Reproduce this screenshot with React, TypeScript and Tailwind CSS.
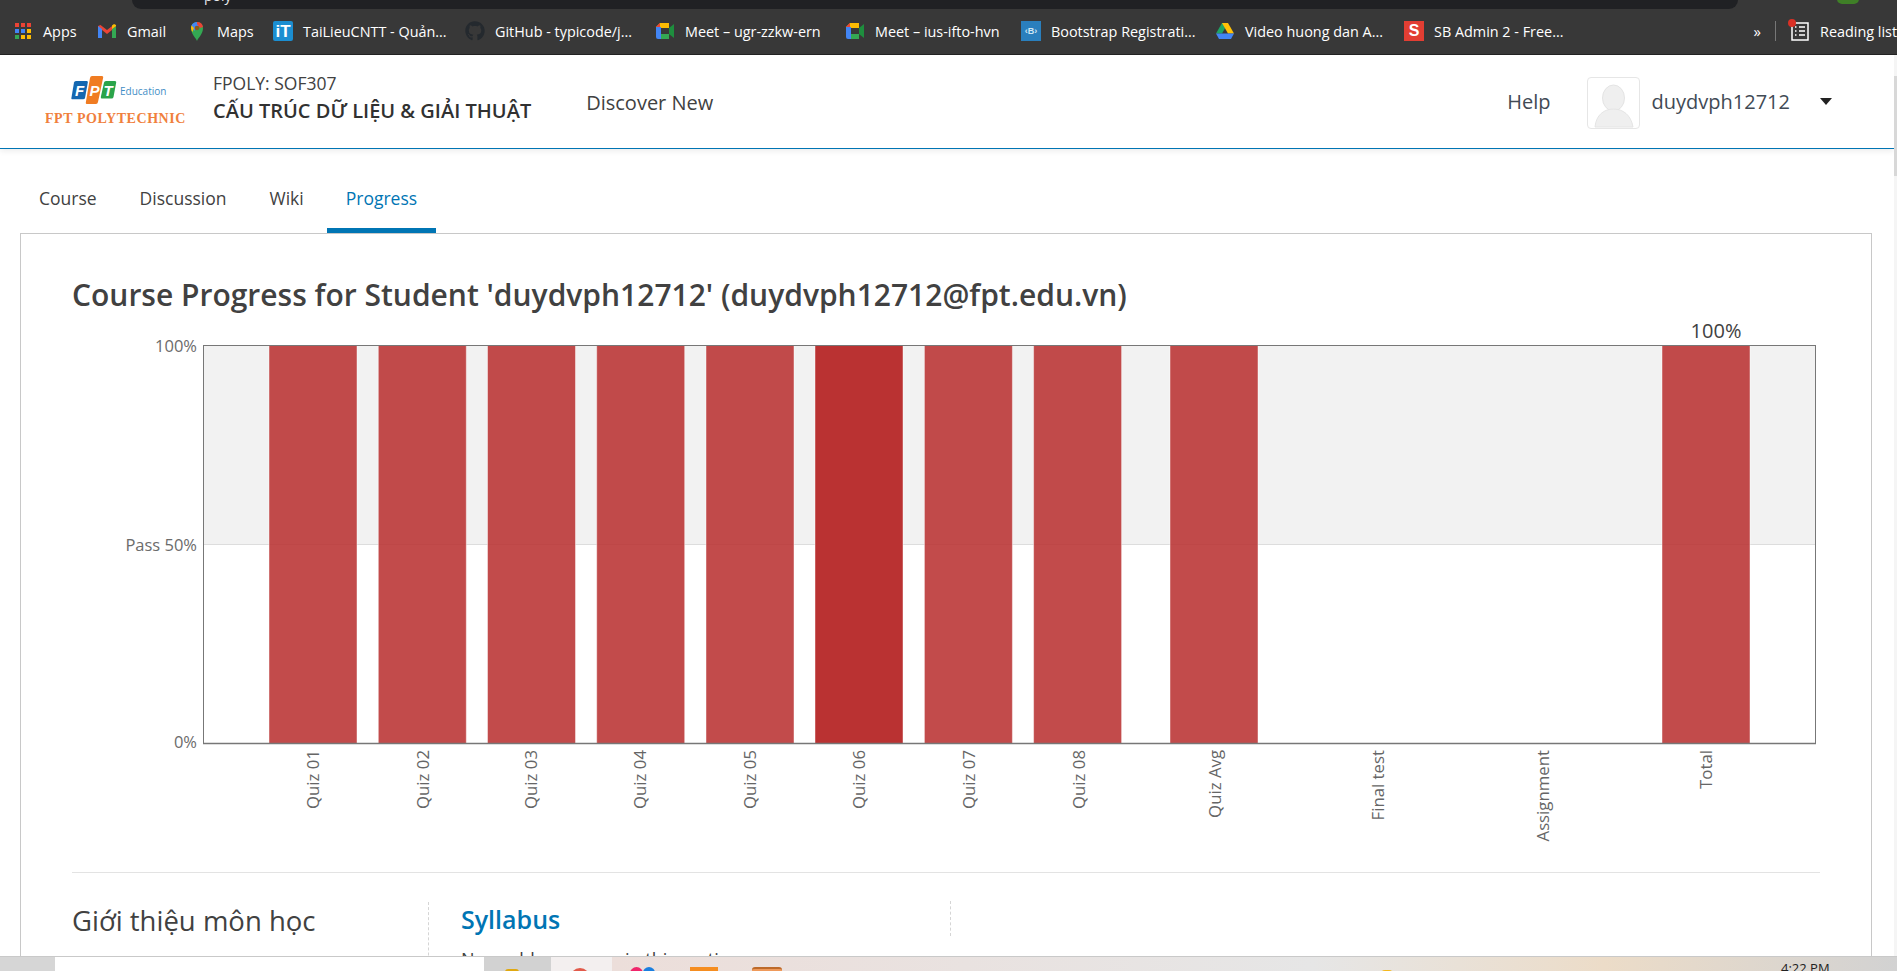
import React from "react";
import { FaGithub } from "react-icons/fa";

const Apps = () => (
  <svg width="20" height="18" viewBox="0 0 18 18">
    {[["#ea4335", "#ea4335", "#ea4335"], ["#4285f4", "#4285f4", "#fbbc04"], ["#34a853", "#fbbc04", "#fbbc04"]].map((r, i) =>
      r.map((c, j) => <rect key={`${i}${j}`} x={1 + j * 6} y={1 + i * 6} width="4" height="4" fill={c} />)
    )}
  </svg>
);
const Gmail = () => (
  <svg width="20" height="16" viewBox="0 0 20 16">
    <path d="M1 15V3l2.500-1L10 7l6.500-5L19 3v12h-4V7l-5 4-5-4v8z" fill="#ea4335" />
    <path d="M1 15V3l4 3v9z" fill="#4285f4" />
    <path d="M19 15V3l-4 3v9z" fill="#34a853" />
    <path d="M15 6l4-3V2l-2-1-2 1.500z" fill="#fbbc04" />
  </svg>
);
const MapPin = () => (
  <svg width="20" height="20" viewBox="0 0 20 20">
    <path d="M10 20c-1-3-6-7-6-13a6 6 0 0 1 12 0c0 6-5 10-6 13z" fill="#34a853" />
    <path d="M4.500 4.500A6 6 0 0 1 10 1l3 3-6 6z" fill="#4285f4" />
    <path d="M4 7c0-1 .2-1.800.5-2.500L7 7l-1.500 4C4.500 9.500 4 8.500 4 7z" fill="#fbbc04" />
    <path d="M10 1a6 6 0 0 1 6 5l-3 1-3-4z" fill="#ea4335" />
    <circle cx="10" cy="7" r="2.300" fill="#8a5a1e" />
  </svg>
);
const IT = () => (
  <div className="flex h-[20px] w-[20px] items-center justify-center rounded-[2px] bg-[#1b8ed1] text-[17px] font-bold leading-none text-white [font-family:'Liberation_Sans',sans-serif]">iT</div>
);
const Meet = () => (
  <svg width="20" height="18" viewBox="0 0 20 18">
    <path d="M1 5l4-4h9v5H6v6H1z" fill="#fbbc04" />
    <path d="M1 12h5v5H3a2 2 0 0 1-2-2z" fill="#4285f4" />
    <path d="M1 5h5v7H1z" fill="#4285f4" />
    <path d="M1 5l4-4v4z" fill="#ea4335" />
    <path d="M6 12h8v5H6z" fill="#34a853" />
    <path d="M14 6v6l5 4V2z" fill="#1e8e3e" />
  </svg>
);
const Boot = () => (
  <div className="flex h-[20px] w-[20px] items-center justify-center bg-[#2a7fbd] text-[9px] font-bold leading-none text-[#cfe6f5] [font-family:'Liberation_Sans',sans-serif]">‹B›</div>
);
const Drive = () => (
  <svg width="20" height="18" viewBox="0 0 20 18">
    <path d="M7 1h6l-6 10.500H1z" fill="#1fa463" />
    <path d="M7 1h6l6 10.500h-6z" fill="#ffc107" />
    <path d="M1 11.500h18L16 17H4z" fill="#4285f4" />
  </svg>
);
const SB = () => (
  <div className="flex h-[20px] w-[20px] items-center justify-center bg-[#e23e33] text-[16px] font-bold leading-none text-white [font-family:'Liberation_Sans',sans-serif]">S</div>
);

const marks = [
  { icon: <Apps />, text: "Apps", w: "w-[33px]" },
  { icon: <Gmail />, text: "Gmail", w: "w-[39px]" },
  { icon: <MapPin />, text: "Maps", w: "w-[35px]" },
  { icon: <IT />, text: "TaiLieuCNTT - Quản...", w: "w-[141px]" },
  { icon: <FaGithub className="text-[20px] text-[#24292e]" />, text: "GitHub - typicode/j...", w: "w-[139px]" },
  { icon: <Meet />, text: "Meet – ugr-zzkw-ern", w: "w-[139px]" },
  { icon: <Meet />, text: "Meet – ius-ifto-hvn", w: "w-[125px]" },
  { icon: <Boot />, text: "Bootstrap Registrati...", w: "w-[143px]" },
  { icon: <Drive />, text: "Video huong dan A...", w: "w-[138px]" },
  { icon: <SB />, text: "SB Admin 2 - Free...", w: "w-[130px]" },
];

const BrowserBar = () => (
  <div className="shrink-0 bg-[#383838] [font-family:'Open_Sans',sans-serif]">
    <div className="flex h-[9px] justify-between overflow-hidden">
      <div className="ml-[132px] h-[9px] w-[1606px] overflow-hidden rounded-b-[9px] bg-[#202124] pl-[72px]">
        <span className="-mt-[14px] block text-[14px] leading-[20px] text-[#e8eaed]">poly</span>
      </div>
      <div className="mr-[38px] -mt-[6px] h-[10px] w-[22px] rounded-full bg-[#3f7f27]" />
    </div>
    <div className="flex h-[46px] items-center border-b border-[#222] pl-[13px] text-[14.400px] text-white">
      {marks.map((m) => (
        <div key={m.text} className="mr-[21px] flex items-center">
          <div className="flex w-[20px] justify-center">{m.icon}</div>
          <span className={`ml-[10px] whitespace-nowrap ${m.w}`}>{m.text}</span>
        </div>
      ))}
      <div className="ml-auto flex min-w-0 items-center">
        <span className="text-[15px] leading-none">»</span>
        <div className="ml-[14px] h-[20px] w-px bg-[#777]" />
        <div className="relative ml-[14px] flex">
          <svg width="20" height="20" viewBox="0 0 20 20" fill="none" stroke="#fff" strokeWidth="1.500">
            <rect x="2" y="2" width="16" height="17" />
            <path d="M9 6h6M9 10h6M9 14h6M5 6h1.500M5 10h1.500M5 14h1.500" />
          </svg>
          <div className="absolute -left-[2px] -top-[2px] h-[8px] w-[8px] rounded-full bg-[#d93025]" />
        </div>
        <span className="ml-[10px] w-[77px] overflow-hidden whitespace-nowrap">Reading list</span>
      </div>
    </div>
  </div>
);

const Logo = () => (
  <svg width="150" height="56" viewBox="45 73 150 56" className="shrink-0">
    <path d="M76 80h11q1 0 .8 1.500L85 97q-.3 1.200-2 1.200H72q-.8 0 -.6-1.200L74 81.500q.3-1.500 2-1.500z" fill="#1467b0" />
    <path d="M92 75h10q1.500 0 1.200 1.500L98 101q-.4 2-2 2H87q-1.500 0-1.200-1.500L90 77q.4-2 2-2z" fill="#f07c22" />
    <path d="M106 80h9q1.500 0 1.200 1.500L113.500 96q-.3 1.500-2 1.500H102q-1.400 0-1.200-1.500L104 81.500q.3-1.500 2-1.500z" fill="#2aa44a" />
    <text x="75" y="95" fontSize="15" fontStyle="italic" fontWeight="700" fill="#fff" fontFamily="Liberation Sans">F</text>
    <text x="89.500" y="95" fontSize="15" fontStyle="italic" fontWeight="700" fill="#fff" fontFamily="Liberation Sans">P</text>
    <text x="103.500" y="95" fontSize="15" fontStyle="italic" fontWeight="700" fill="#fff" fontFamily="Liberation Sans">T</text>
    <text x="120" y="94" fontSize="10" fill="#3f8ec6" fontFamily="Open Sans">Education</text>
    <text x="45" y="122" fontSize="14" fontWeight="700" fill="#f0803c" letterSpacing=".55" fontFamily="Liberation Serif">FPT POLYTECHNIC</text>
  </svg>
);

const Header = () => (
  <header className="flex h-[94px] shrink-0 items-center border-b border-[#0075b4] pl-[45px] shadow-[0_2px_6px_rgba(0,0,0,0.08)]">
    <Logo />
    <div className="ml-[18px] -mt-[7px]">
      <div className="text-[17.500px] leading-[24px] text-[#414141]">FPOLY: SOF307</div>
      <div className="mt-[2px] text-[20px] font-semibold leading-[28px] text-[#313131]">CẤU TRÚC DỮ LIỆU & GIẢI THUẬT</div>
    </div>
    <div className="ml-[55px] mt-[3px] text-[20px] text-[#414141]">Discover New</div>
    <div className="ml-auto text-[20px] text-[#414a55]">Help</div>
    <div className="ml-[36px] mt-[3px] h-[52px] w-[53px] overflow-hidden rounded-[4px] border border-[#e6e6e6]">
      <svg width="51" height="50" viewBox="0 0 51 50">
        <ellipse cx="25.500" cy="20" rx="11" ry="13" fill="#efefef" stroke="#e4e4e4" />
        <path d="M7 49c1-12 9-18 18.500-18S43 37 45 49z" fill="#efefef" stroke="#e4e4e4" />
      </svg>
    </div>
    <div className="ml-[12px] text-[20px] text-[#414a55]">duydvph12712</div>
    <svg width="12" height="7" viewBox="0 0 12 7" className="ml-[30px] mr-[62px] shrink-0">
      <path d="M0 0h12L6 7z" fill="#222" />
    </svg>
  </header>
);

const Tabs = () => (
  <nav className="flex h-[84px] shrink-0 items-end pl-[19px] text-[17.500px] leading-[24px] text-[#414141]">
    <a className="mr-[3px] h-[62px] px-[20px] pt-[15px]">Course</a>
    <a className="mr-[3px] h-[62px] px-[20px] pt-[15px]">Discussion</a>
    <a className="mr-[3px] h-[62px] px-[20px] pt-[15px]">Wiki</a>
    <a className="h-[62px] border-b-[5px] border-[#0075b4] px-[19px] pt-[15px] text-[#0075b4]">Progress</a>
  </nav>
);

const bars = [
  { x: 269, c: 0.88 }, { x: 378.300, c: 0.88 }, { x: 487.500, c: 0.88 }, { x: 596.700, c: 0.88 },
  { x: 706, c: 0.88 }, { x: 815, c: 1 }, { x: 924.400, c: 0.88 }, { x: 1033.600, c: 0.88 },
  { x: 1170, c: 0.88 }, { x: 1662, c: 0.88 },
];
const labels: [string, number][] = [
  ["Quiz 01", 313], ["Quiz 02", 423], ["Quiz 03", 531], ["Quiz 04", 640], ["Quiz 05", 750], ["Quiz 06", 859],
  ["Quiz 07", 969], ["Quiz 08", 1079], ["Quiz Avg", 1215], ["Final test", 1378], ["Assignment", 1543], ["Total", 1706],
];

const Chart = () => (
  <svg width="1760" height="537" viewBox="72 313 1760 537" className="block" fontFamily="Open Sans">
    <rect x="203.500" y="345.500" width="1612" height="398" fill="#fff" />
    <rect x="203.500" y="345.500" width="1612" height="198.500" fill="#f2f2f2" />
    <path d="M203.500 544.500H1816" stroke="#ddd" />
    {bars.map((b) => (
      <g key={b.x}>
        <rect x={b.x} y="345.500" width="88" height="398" fill="#ba3232" opacity={b.c} />
        <path d={`M${b.x} 346V743M${b.x + 88} 346V743`} stroke="#fff" strokeOpacity=".45" />
      </g>
    ))}
    <rect x="203.500" y="345.500" width="1612" height="398" fill="none" stroke="#777" />
    <path d="M203 743.500H1816" stroke="#777" strokeWidth="1.500" />
    <g fontSize="16.500" fill="#6b6b6b" textAnchor="end">
      <text x="197" y="352">100%</text>
      <text x="197" y="551">Pass 50%</text>
      <text x="197" y="748">0%</text>
    </g>
    <text x="1716" y="338" fontSize="20" fill="#414141" textAnchor="middle">100%</text>
    {labels.map(([t, x]) => (
      <text key={t} transform={`translate(${x + 6} 750) rotate(-90)`} fontSize="16.800" fill="#666" textAnchor="end">{t}</text>
    ))}
  </svg>
);

const Card = () => (
  <section className="ml-[20px] h-[900px] w-[1852px] shrink-0 border border-[#c8c8c8] pl-[51px] pr-[51px] pt-[43px]">
    <h1 className="text-[30px] font-semibold leading-[36px] text-[#414141]">
      Course Progress for Student 'duydvph12712' (duydvph12712@fpt.edu.vn)
    </h1>
    <Chart />
    <div className="mt-[22px] h-px bg-[#e3e3e3]" />
    <div className="mt-[29px] flex">
      <div className="h-[200px] w-[357px] border-r border-dashed border-[#d5d5d5]">
        <h2 className="mt-[1px] text-[27.500px] leading-[36px] text-[#414141]">Giới thiệu môn học</h2>
      </div>
      <div className="pl-[32px]">
        <div className="h-[35px] w-[490px] border-r border-dashed border-[#d5d5d5]">
          <h3 className="-mt-[1px] text-[25px] font-semibold leading-[36px] text-[#0075b4]">Syllabus</h3>
        </div>
        <p className="mt-[11px] text-[18px] leading-[24px] text-[#414141]">No problem scores in this section</p>
      </div>
    </div>
  </section>
);

const Taskbar = () => (
  <div className="flex h-[15px] shrink-0 overflow-hidden border-t border-[#c9c9c9] [font-family:'Open_Sans',sans-serif]">
    <div className="w-[55px] bg-[#d6d6d6]" />
    <div className="w-[429px] bg-white" />
    <div className="w-[67px] bg-[#d2d2d2] pl-[21px] pt-[12px]">
      <div className="h-[8px] w-[14px] rounded-t-[3px] bg-[#e0a810]" />
    </div>
    <div className="w-[61px] bg-[#f3efef] pl-[19px] pt-[11px]">
      <div className="h-[12px] w-[20px] rounded-t-full bg-[#e25a4a]" />
    </div>
    <div className="flex w-[700px] bg-gradient-to-r from-[#ecdeda] to-[#e6e6e6] pt-[10px]">
      <div className="ml-[18px] h-[8px] w-[13px] rounded-t-full bg-[#f0266b]" />
      <div className="h-[8px] w-[12px] rounded-t-full bg-[#1a7fe0]" />
      <div className="ml-[35px] h-[8px] w-[28px] bg-[#f58d20]" />
      <div className="ml-[34px] h-[8px] w-[30px] rounded-t-[3px] border-t-2 border-[#bd6a2a] bg-[#ef9a5b]" />
    </div>
    <div className="flex flex-1 bg-gradient-to-r from-[#e6e6e6] via-[#ecdcc8] to-[#d2d2d2]">
      <div className="ml-[69px] mt-[13px] h-[8px] w-[12px] rounded-full bg-[#f5b81c]" />
      <span className="ml-[388px] mt-[3px] text-[13px] leading-[16px] text-[#222]">4:22 PM</span>
    </div>
  </div>
);

export default function App() {
  return (
    <div className="flex h-[971px] w-[1897px] flex-col overflow-hidden bg-white [font-family:'Open_Sans',sans-serif]">
      <BrowserBar />
      <div className="flex min-h-0 flex-1">
        <main className="flex min-w-0 flex-1 flex-col overflow-hidden">
          <Header />
          <Tabs />
          <Card />
        </main>
        <div className="w-[3px] shrink-0 bg-[#f5f5f5]">
          <div className="mt-[21px] h-[100px] bg-[#d8d8d8]" />
        </div>
      </div>
      <Taskbar />
    </div>
  );
}
